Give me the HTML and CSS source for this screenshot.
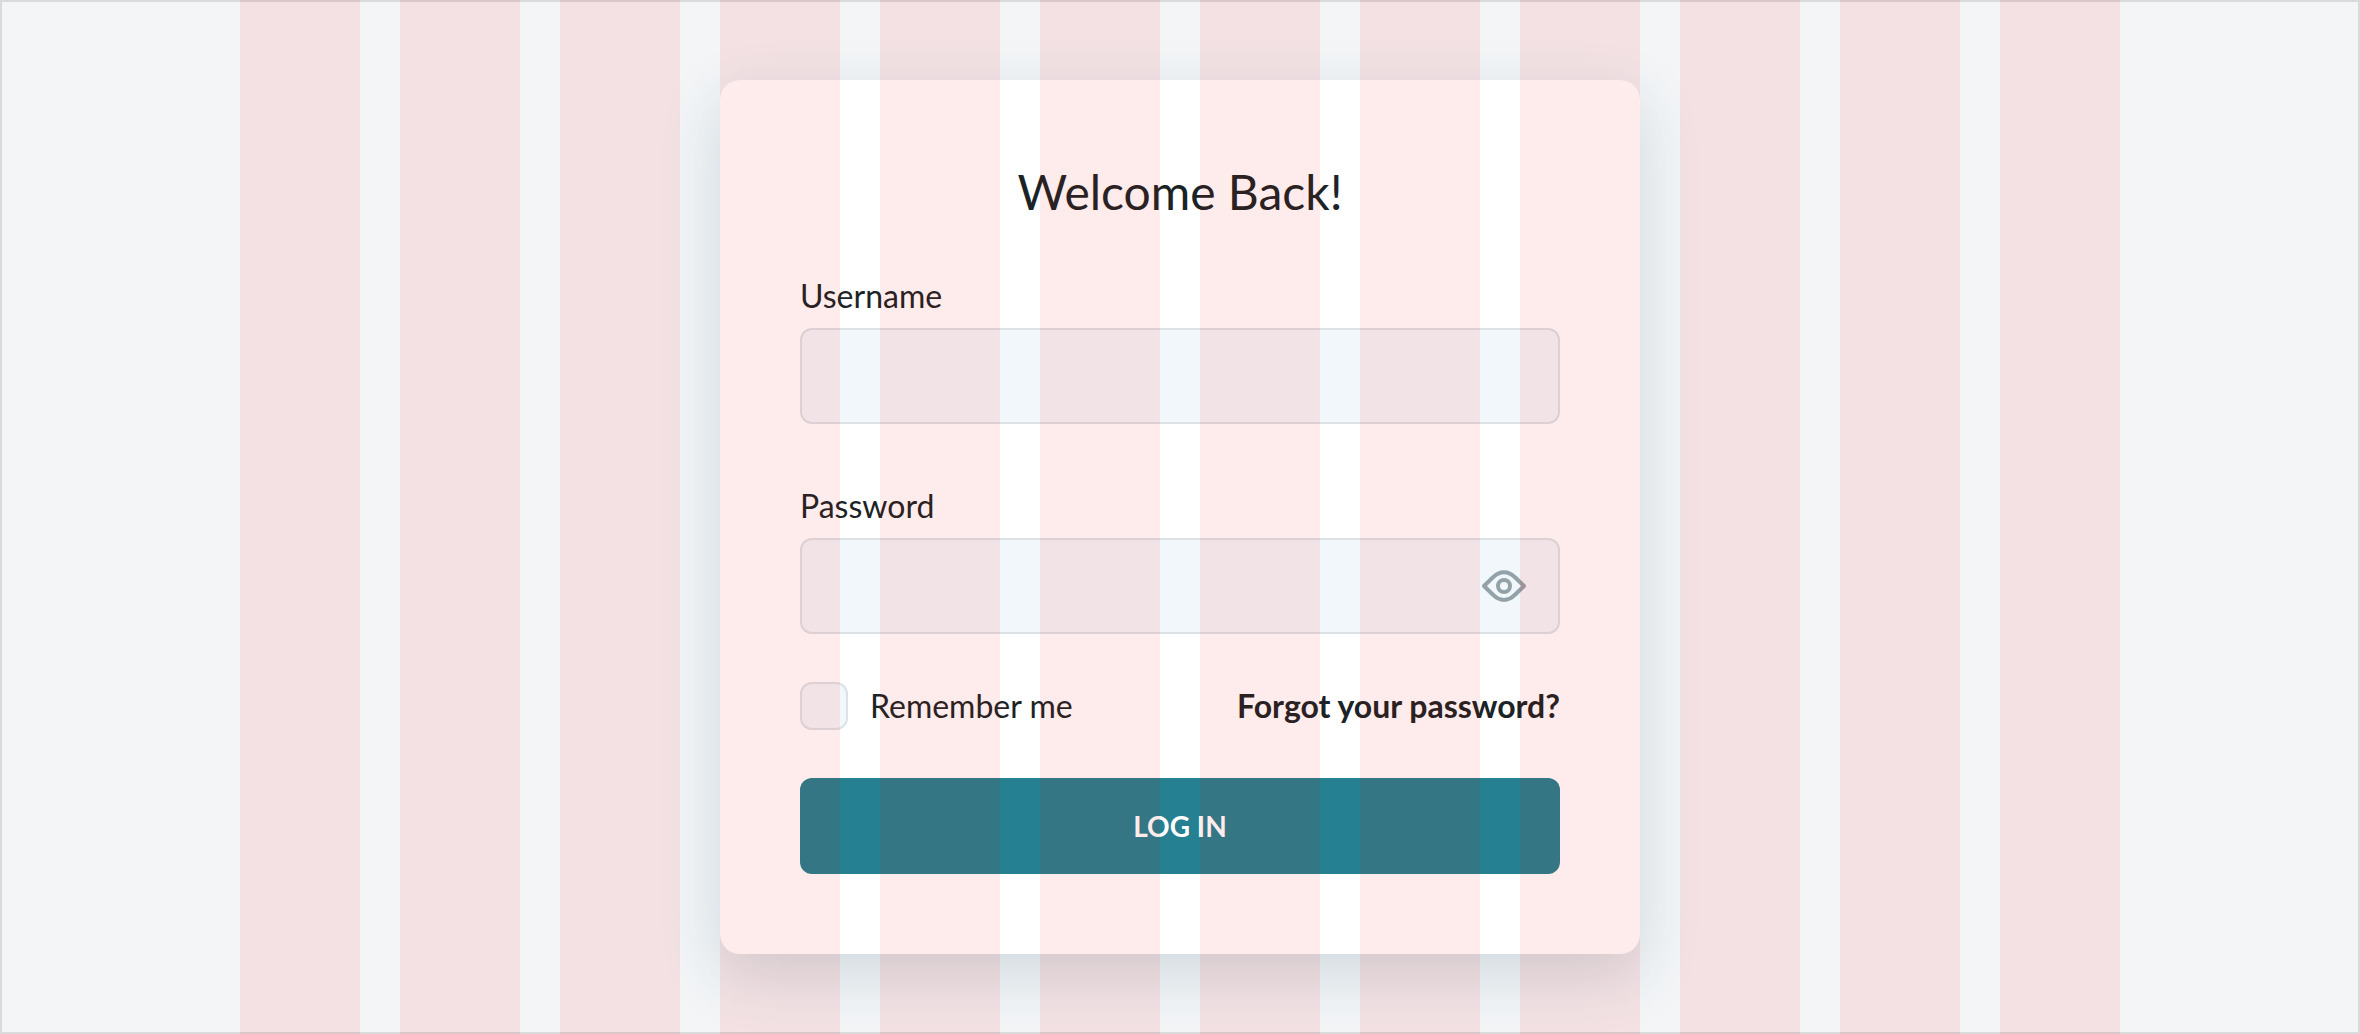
FILE: index.html
```html
<!DOCTYPE html>
<html lang="en">
<head>
    <meta charset="UTF-8">
    <meta name="viewport" content="width=device-width, initial-scale=1.0">
    <title>Log In</title>
    <link rel="stylesheet" href="styles.css">
</head>
<body>
    <main class="page">
        <form class="card">
            <h1 class="title">Welcome Back!</h1>

            <div class="field">
                <label for="username">Username</label>
                <input type="text" id="username" class="input" autocomplete="username">
            </div>

            <div class="field">
                <label for="password">Password</label>
                <div class="password-wrapper">
                    <input type="password" id="password" class="input" autocomplete="current-password">
                    <button type="button" class="toggle" aria-label="Show password">
                        <svg width="44" height="32" viewBox="0 0 44 32" fill="none" stroke="currentColor" stroke-width="4" stroke-linejoin="round">
                            <path d="M2 16 L11 7.3 C17.5 .4 26.5 .4 33 7.3 L42 16 L33 24.7 C26.5 31.6 17.5 31.6 11 24.7 Z"/>
                            <circle cx="22" cy="16" r="6"/>
                        </svg>
                    </button>
                </div>
            </div>

            <div class="options">
                <input type="checkbox" id="remember" class="checkbox">
                <label for="remember">Remember me</label>
                <a href="#" class="forgot">Forgot your password?</a>
            </div>

            <button type="submit" class="button">LOG IN</button>
        </form>

        <!-- 12 column layout grid -->
        <div class="grid-overlay" aria-hidden="true">
            <div class="columns">
                <span></span><span></span><span></span><span></span>
                <span></span><span></span><span></span><span></span>
                <span></span><span></span><span></span><span></span>
            </div>
        </div>
    </main>
</body>
</html>
```

FILE: styles.css
```css
* {
    box-sizing: border-box;
}
body {
    margin: 0;
    font-family: Lato, "Liberation Sans", sans-serif;
    font-size: 32px;
    line-height: 40px;
    color: #1a2426;
    background-color: #f3f5f7;
}
.page {
    position: relative;
    display: flex;
    justify-content: center;
    align-items: center;
    min-height: 100vh;
    padding: 80px 20px;
    overflow: hidden;
}
.card {
    width: 100%;
    max-width: 920px;
    padding: 80px;
    background-color: white;
    border-radius: 20px;
    box-shadow: 0 20px 60px rgba(37, 80, 100, 0.17);
}
.title {
    margin: 0 0 52px;
    font-size: 48px;
    font-weight: normal;
    line-height: 64px;
    text-align: center;
}
.field {
    display: flex;
    flex-direction: column;
    gap: 12px;
}
.field + .field {
    margin-top: 62px;
}
.input {
    display: block;
    width: 100%;
    height: 96px;
    padding: 0 32px;
    font: inherit;
    color: inherit;
    background-color: #f1f7fa;
    border: 2px solid #dce2e6;
    border-radius: 12px;
}
.password-wrapper {
    position: relative;
}
.password-wrapper .input {
    padding-right: 96px;
}
.toggle {
    position: absolute;
    top: 0;
    right: 22px;
    display: flex;
    align-items: center;
    height: 100%;
    padding: 0 12px;
    color: #92a2a8;
    background: none;
    border: none;
    cursor: pointer;
}
.options {
    display: flex;
    align-items: center;
    margin: 48px 0;
}
.checkbox {
    appearance: none;
    width: 48px;
    height: 48px;
    margin: 0 22px 0 0;
    background-color: #f1f7fa;
    border: 2px solid #dce2e6;
    border-radius: 12px;
}
.checkbox:checked {
    background-color: #258091;
}
.forgot {
    margin-left: auto;
    font-weight: bold;
    color: inherit;
    text-decoration: none;
}
.button {
    display: block;
    width: 100%;
    height: 96px;
    font: inherit;
    font-size: 28px;
    font-weight: bold;
    color: white;
    background-color: #258091;
    border: none;
    border-radius: 12px;
    cursor: pointer;
}
.grid-overlay {
    position: absolute;
    inset: 0;
    display: flex;
    justify-content: center;
    border: 2px solid rgba(0, 0, 0, 0.11);
    pointer-events: none;
}
.columns {
    display: grid;
    grid-template-columns: repeat(12, 1fr);
    gap: 40px;
    width: 100%;
    max-width: 1880px;
    margin: -2px 0;
}
.columns span {
    background-color: rgba(240, 0, 0, 0.08);
}
```
